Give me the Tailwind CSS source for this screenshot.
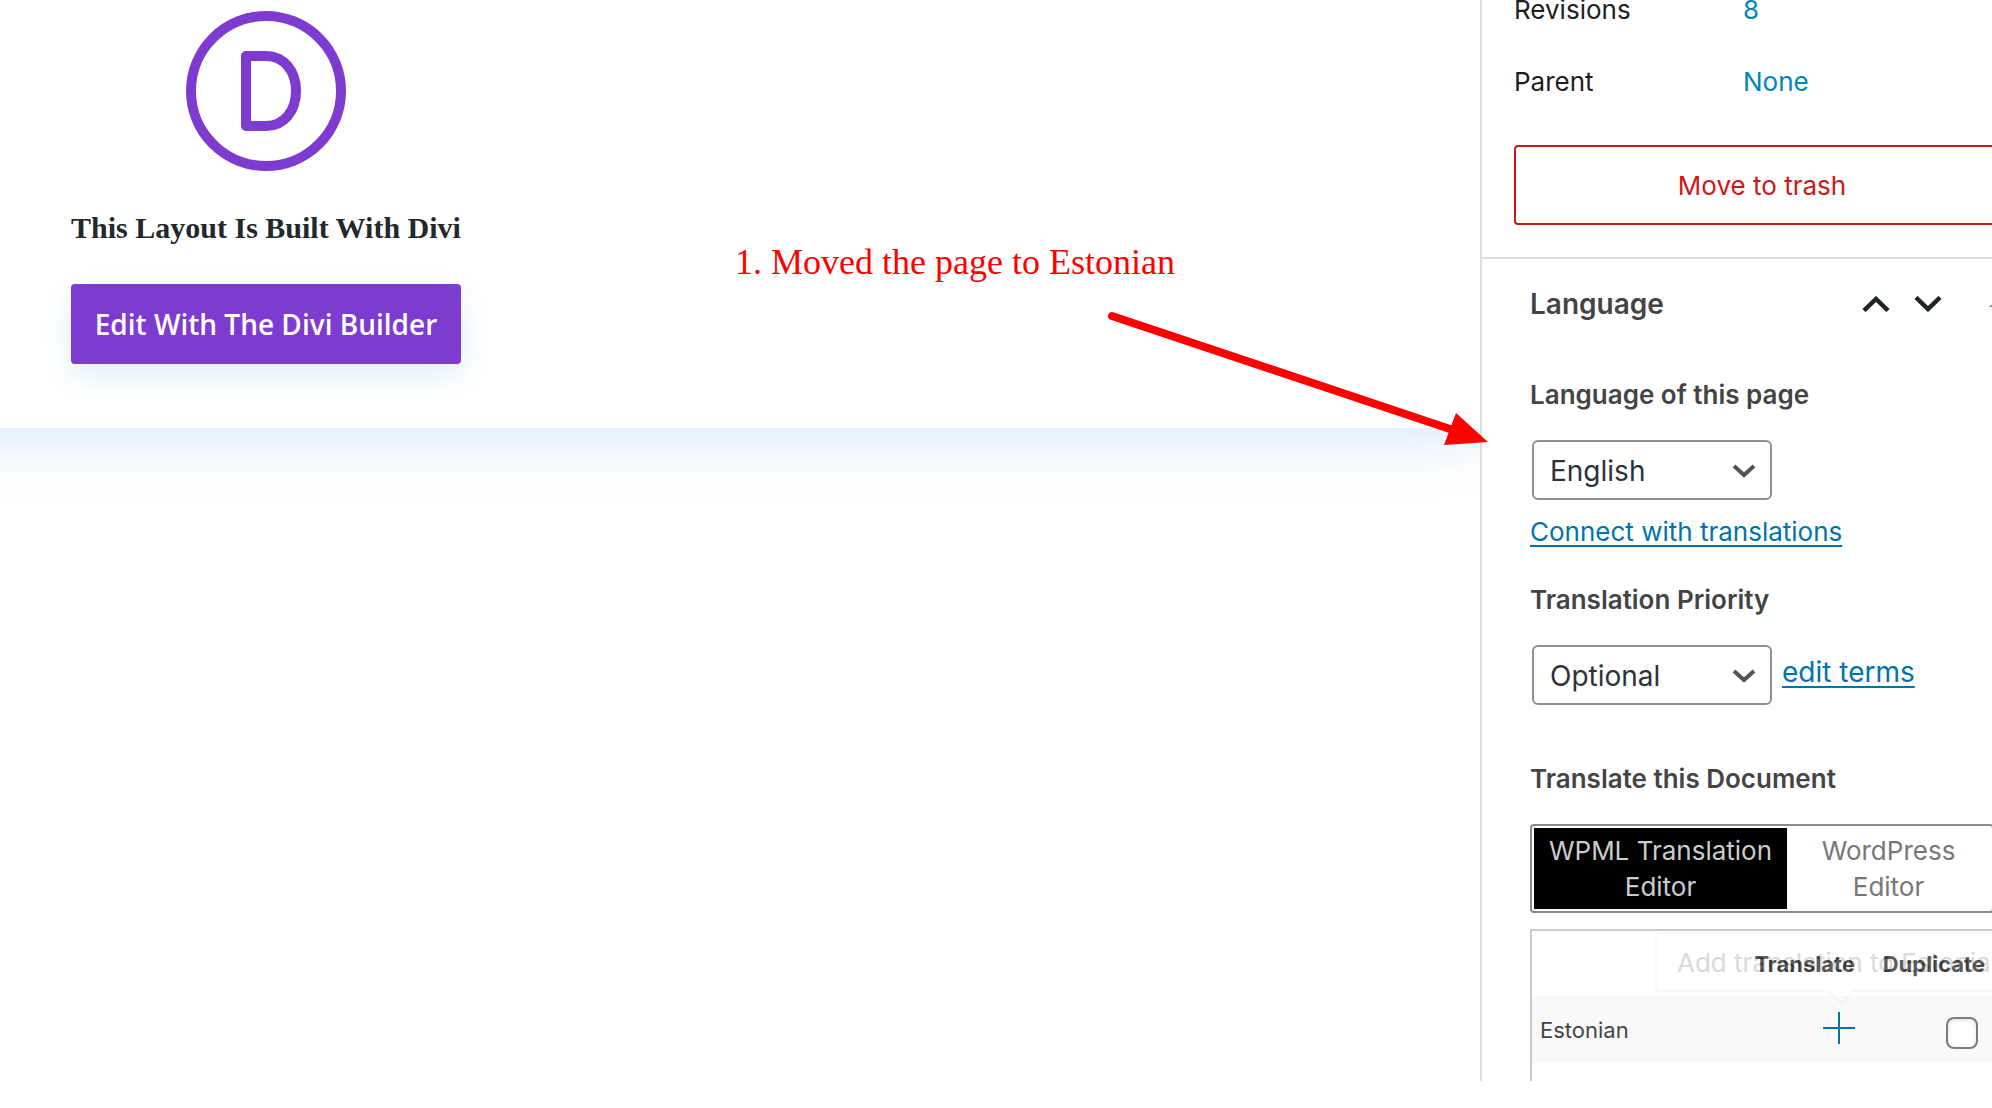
<!doctype html>
<html lang="en">

<head>
	<meta charset="utf-8">
	<meta name="viewport" content="width=device-width, initial-scale=1.0">
	<title>Edit Page</title>
	<script src="https://cdn.jsdelivr.net/npm/@tailwindcss/browser@4"></script>
</head>

<body class="bg-white">
	<div class="relative flex h-screen overflow-hidden pb-[27px] font-['Inter',sans-serif] text-[26px] leading-9 text-[#1e1e1e]">

		<!-- Editor canvas -->
		<main class="min-w-0 flex-1 overflow-hidden">
			<section class="-ml-20 h-[428px] pt-[11px] pl-20 shadow-[0_10px_60px_rgba(43,135,218,0.2)]">
				<div class="flex w-[532px] flex-col items-center">
					<svg class="size-40" viewBox="0 0 160 160" fill="none" stroke="#7e3bd0" stroke-width="10">
						<circle cx="80" cy="80" r="75" />
						<path stroke-linejoin="round" d="M60 45H80C98 45 110 60 110 80S98 115 80 115H60Z" />
					</svg>
					<h3 class="mt-[37px] font-['Liberation_Serif',serif] text-[30px] leading-10 font-bold text-[#23282d]">This Layout Is Built With Divi</h3>
					<button type="button" class="mt-9 h-20 w-[390px] rounded bg-[#7e3bd0] font-['Open_Sans',sans-serif] text-[28px] font-semibold text-white shadow-[0_10px_30px_rgba(43,135,218,0.15)]">Edit With The Divi Builder</button>
				</div>
			</section>
		</main>

		<!-- Settings sidebar -->
		<aside class="w-[512px] shrink-0 overflow-hidden border-l-2 border-[#ddd] bg-white">
			<div class="flex h-full w-[560px] flex-col">
				<section class="border-b-2 border-[#ddd] px-8 pb-8">
					<div class="-mt-2 flex">
						<span class="w-[229px]">Revisions</span>
						<a href="#" class="text-[#0085ba]">8</a>
					</div>
					<div class="mt-9 flex">
						<span class="w-[229px]">Parent</span>
						<a href="#" class="text-[#0085ba]">None</a>
					</div>
					<button type="button" class="mt-[45px] h-20 w-full rounded border-2 border-[#cc1818] pt-0.5 text-[#cc1818]">Move to trash</button>
				</section>

				<section class="flex min-h-0 flex-1 flex-col px-12 pt-[27px] text-[#444]">
					<div class="flex items-center">
						<h2 class="text-[28px] font-semibold">Language</h2>
						<div class="ml-auto flex items-center gap-6 text-[#1d2327]">
							<button type="button" aria-label="Move up">
								<svg class="h-4 w-7" viewBox="0 0 28 16" fill="none" stroke="currentColor" stroke-width="4.500"><path d="M2 14.500 14 3 26 14.500" /></svg>
							</button>
							<button type="button" aria-label="Move down">
								<svg class="h-4 w-7" viewBox="0 0 28 16" fill="none" stroke="currentColor" stroke-width="4.500"><path d="M2 1.500 14 13 26 1.500" /></svg>
							</button>
							<button type="button" aria-label="Toggle panel" class="text-[#82878c]">
								<svg class="h-4 w-7" viewBox="0 0 28 16" fill="currentColor"><path d="M22.500 11 28 7V11Z" /></svg>
							</button>
						</div>
					</div>

					<label for="page-language" class="mt-[55px] font-semibold">Language of this page</label>
					<div class="relative mt-[27px] ml-0.5 w-60">
						<select id="page-language" class="h-[60px] w-full appearance-none rounded-md border-2 border-[#8c8f94] bg-white pt-0.5 pl-4 text-[28px] text-[#2c3338]">
							<option>English</option>
							<option>Estonian</option>
						</select>
						<svg class="pointer-events-none absolute top-6 right-4 h-4 w-6" viewBox="0 0 24 16" fill="none" stroke="#555" stroke-width="4"><path d="M2 2 12 11 22 2" /></svg>
					</div>
					<a href="#" class="mt-[14px] self-start text-[#0073aa] underline decoration-2 underline-offset-4">Connect with translations</a>

					<label for="priority" class="mt-8 font-semibold">Translation Priority</label>
					<div class="mt-[27px] ml-0.5 flex">
						<div class="relative w-60">
							<select id="priority" class="h-[60px] w-full appearance-none rounded-md border-2 border-[#8c8f94] bg-white pt-0.5 pl-4 text-[28px] text-[#2c3338]">
								<option>Optional</option>
								<option>Required</option>
							</select>
							<svg class="pointer-events-none absolute top-6 right-4 h-4 w-6" viewBox="0 0 24 16" fill="none" stroke="#555" stroke-width="4"><path d="M2 2 12 11 22 2" /></svg>
						</div>
						<a href="#" class="ml-[10px] pt-[9px] text-[28px] text-[#0073aa] underline decoration-2 underline-offset-4">edit terms</a>
					</div>

					<h3 class="mt-14 font-semibold">Translate this Document</h3>
					<div class="mt-[27px] flex rounded border-2 border-[#8c8c8c] p-0.5 text-center">
						<button type="button" class="w-[253px] bg-black pt-[5px] pb-1 text-[#ccc]">WPML Translation<br>Editor</button>
						<button type="button" class="flex-1 pt-[5px] pb-1 text-[#777]">WordPress<br>Editor</button>
					</div>

					<div class="relative mt-4 min-h-0 flex-1 border-t-2 border-l-2 border-[#c8ccd2] text-[22px]">
						<table class="w-full">
							<thead class="text-[#333]">
								<tr class="h-[65px]">
									<th></th>
									<th class="w-[116px] text-right font-bold">Translate</th>
									<th class="w-[139px] pr-[9px] text-right font-bold">Duplicate</th>
								</tr>
							</thead>
							<tbody>
								<tr class="h-[67px] bg-[#f9f9f9]">
									<td class="pl-2"><label for="duplicate-et">Estonian</label></td>
									<td class="pb-1">
										<button type="button" aria-label="Add translation to Estonian" class="ml-auto block">
											<svg class="size-8" viewBox="0 0 32 32" stroke="#0073aa" stroke-width="2"><path d="M16 0V32M0 16H32" /></svg>
										</button>
									</td>
									<td class="pr-4">
										<input id="duplicate-et" type="checkbox" class="mt-[6px] ml-auto block size-8 appearance-none rounded-lg border-2 border-[#7c7c7c] bg-white shadow-[inset_0_2px_4px_rgba(0,0,0,0.1)]">
									</td>
								</tr>
							</tbody>
						</table>
						<!-- Tooltip fading in over the header row -->
						<div role="tooltip" class="absolute top-px left-[123px] flex h-[60px] w-[372px] items-center rounded border-2 border-[#ddd] bg-white pt-0.5 pl-5 text-[26px] whitespace-nowrap text-[#444] opacity-20">
							Add translation to Estonian
							<svg class="absolute top-14 left-[170px] h-3.5 w-7" viewBox="0 0 28 14" fill="#fff" stroke="#ddd" stroke-width="2"><path d="M1 0 14 13 27 0" /></svg>
						</div>
					</div>
				</section>
			</div>
		</aside>

		<!-- Annotation drawn over the editor -->
		<p class="absolute top-[240px] right-[817px] font-['Liberation_Serif',serif] text-[36px] leading-[44px] whitespace-nowrap text-[#f00]">1. Moved the page to Estonian</p>
		<svg class="absolute top-[300px] right-[492px] h-[160px] w-[400px]" viewBox="0 0 400 160" fill="#f00">
			<path d="M12 16 350 129" stroke="#f00" stroke-width="8" stroke-linecap="round" />
			<path d="M356 113 388 142 344 145Z" />
		</svg>
	</div>
</body>

</html>
